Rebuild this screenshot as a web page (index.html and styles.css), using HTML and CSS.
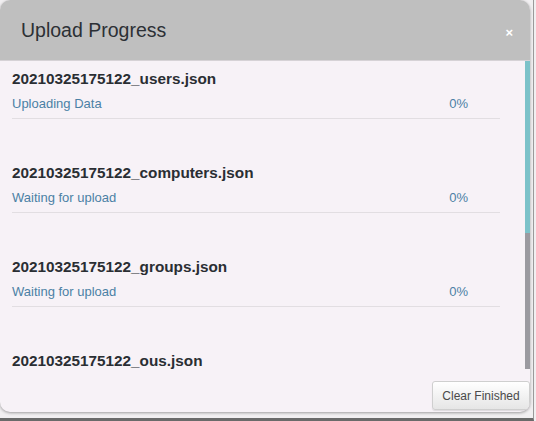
FILE: index.html
```html
<!DOCTYPE html>
<html lang="en">
<head>
    <meta charset="UTF-8">
    <meta name="viewport" content="width=device-width, initial-scale=1.0">
    <title>Upload Progress</title>
    <link rel="stylesheet" href="styles.css">
</head>
<body>
<div class="frame">
    <div class="upload-modal">
        <div class="modal-header">
            <h2>Upload Progress</h2>
            <span class="close-btn">&times;</span>
        </div>

        <!-- File list with its scrollbar -->
        <div class="list-wrap">
            <div class="file-list">
                <div class="file-item">
                    <div class="file-name">20210325175122_users.json</div>
                    <div class="file-status"><span>Uploading Data</span><span>0%</span></div>
                </div>
                <div class="file-item">
                    <div class="file-name">20210325175122_computers.json</div>
                    <div class="file-status"><span>Waiting for upload</span><span>0%</span></div>
                </div>
                <div class="file-item">
                    <div class="file-name">20210325175122_groups.json</div>
                    <div class="file-status"><span>Waiting for upload</span><span>0%</span></div>
                </div>
                <div class="file-item">
                    <div class="file-name">20210325175122_ous.json</div>
                </div>
            </div>
            <div class="scroll-track">
                <div class="scroll-thumb" style="height: 172px;"></div>
            </div>
        </div>

        <div class="modal-footer">
            <button class="clear-btn">Clear Finished</button>
        </div>
    </div>
</div>
</body>
</html>
```

FILE: styles.css
```css
* {
    box-sizing: border-box;
}

body {
    margin: 0;
    background: #f1eff1;
    font-family: "Liberation Sans", Arial, sans-serif;
}

.frame {
    width: 534px;
    height: 421px;
    border-right: 1px solid #9a9a9a;
    border-bottom: 3px solid #6a6a6a;
}

.upload-modal {
    width: 530px;
    height: 412px;
    background: #f7f2f7;
    border-radius: 10px;
    overflow: hidden;
    display: flex;
    flex-direction: column;
    box-shadow: 0 1px 3px rgba(0, 0, 0, 0.35);
}

.modal-header {
    height: 61px;
    background: #bfbfbf;
    border-bottom: 1px solid #d6d2d6;
    display: flex;
    align-items: center;
    justify-content: space-between;
    padding: 0 17px 0 21px;
    flex-shrink: 0;
}

.modal-header h2 {
    margin: 0;
    font-size: 19.5px;
    font-weight: normal;
    color: #2c3035;
}

.close-btn {
    color: #fff;
    font-size: 13px;
    font-weight: bold;
    margin-top: 4px;
}

.list-wrap {
    height: 308px;
    display: flex;
    flex-shrink: 0;
}

.file-list {
    flex: 1;
    overflow: hidden;
    padding: 8px 25px 0 12px;
}

.scroll-track {
    width: 5px;
    background: #9b9aa0;
}

.scroll-thumb {
    background: #7cc2c9;
}

.file-item {
    padding-bottom: 5px;
    border-bottom: 1px solid #e2dee2;
    margin-bottom: 44px;
}

.file-item:last-child {
    border-bottom: none;
    margin-bottom: 0;
}

.file-name {
    font-size: 15.3px;
    font-weight: bold;
    line-height: 20px;
    color: #2a2e33;
}

.file-status {
    display: flex;
    justify-content: space-between;
    margin-top: 6px;
    padding-right: 32px;
    font-size: 13px;
    line-height: 18px;
    color: #4b81a5;
}

.modal-footer {
    flex: 1;
    display: flex;
    justify-content: flex-end;
    align-items: flex-start;
    padding-top: 12px;
}

.clear-btn {
    width: 98px;
    height: 29px;
    padding: 0;
    font-family: "Liberation Sans", Arial, sans-serif;
    font-size: 12px;
    color: #4a4a4a;
    background: linear-gradient(#ffffff, #e6e6e6);
    border: 1px solid #cfcfcf;
    border-radius: 3px;
    box-shadow: 0 1px 1px rgba(0, 0, 0, 0.1);
}
```
